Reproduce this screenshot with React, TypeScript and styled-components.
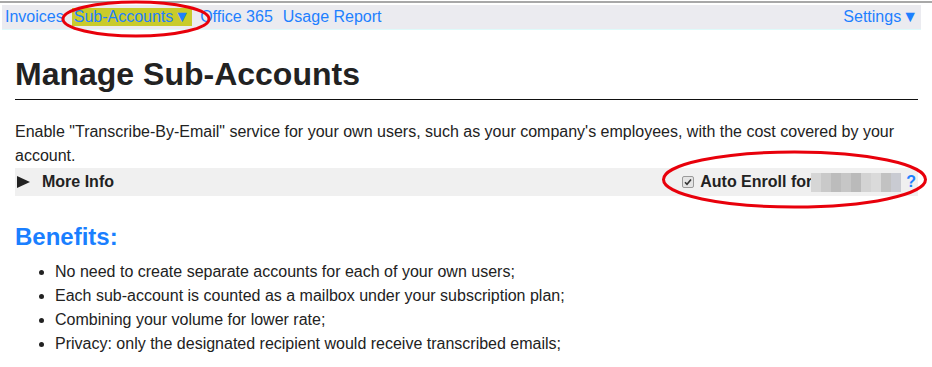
import React from "react";
import styled, { createGlobalStyle } from "styled-components";

const GlobalStyle = createGlobalStyle`
  body {
    margin: 0;
    background: #ffffff;
    font-family: "Liberation Sans", Arial, sans-serif;
    color: #222222;
  }
`;

const Page = styled.div`
  position: relative;
  width: 932px;
  height: 367px;
  overflow: hidden;
`;

const TopRule = styled.div`
  margin-top: 1px;
  height: 2px;
  background: #a8a8a8;
`;

const NavBar = styled.nav`
  margin: 2px 11px 0 2px;
  height: 24px;
  padding: 0 1px 0 1px;
  display: flex;
  justify-content: space-between;
  align-items: center;
  background: #ebebf0;
  border-bottom: 1px solid #defafa;
`;

const NavGroup = styled.div`
  display: flex;
  align-items: center;
  gap: 6px;
`;

const NavLink = styled.a<{ $active?: boolean }>`
  font-size: 16px;
  line-height: 18px;
  color: #1e80ff;
  text-decoration: none;
  padding: 0 2px;
  background: ${(p) => (p.$active ? "#c9cb2b" : "transparent")};
  cursor: pointer;
`;

const Caret = styled.span`
  font-size: 16px;
  margin-left: 1px;
`;

const Main = styled.main`
  padding: 0 14px 0 15px;
`;

const Title = styled.h1`
  margin: 26px 0 0;
  padding-bottom: 6px;
  font-size: 32px;
  line-height: 37px;
  font-weight: 700;
  color: #222222;
  border-bottom: 1px solid #111111;
`;

const Intro = styled.p`
  margin: 20px 0 0;
  font-size: 16px;
  line-height: 24px;
`;

const InfoBar = styled.div`
  height: 28px;
  padding: 0 2px 0 2px;
  display: flex;
  align-items: center;
  justify-content: space-between;
  background: #f0f0f0;
`;

const Toggle = styled.div`
  display: flex;
  align-items: center;
  gap: 12px;
  font-size: 16px;
  font-weight: 700;
`;

const Arrow = styled.span`
  width: 0;
  height: 0;
  border-left: 13px solid #222222;
  border-top: 6px solid transparent;
  border-bottom: 6px solid transparent;
`;

const Enroll = styled.label`
  display: flex;
  align-items: center;
  font-size: 16px;
  font-weight: 700;
`;

const Check = styled.span`
  width: 10px;
  height: 10px;
  margin-right: 6px;
  display: flex;
  align-items: center;
  justify-content: center;
  background: #e4e4e4;
  border: 1px solid #9a9a9a;
  border-radius: 2px;
`;

const Redacted = styled.span`
  display: flex;
  height: 19px;
  margin-left: -1px;
`;

const Pixel = styled.span<{ $shade: string }>`
  width: 10px;
  height: 19px;
  background: ${(p) => p.$shade};
`;

const Help = styled.a`
  margin-left: 5px;
  color: #1e80ff;
  font-weight: 700;
  text-decoration: none;
`;

const SubTitle = styled.h2`
  margin: 27px 0 0;
  font-size: 24px;
  line-height: 28px;
  font-weight: 700;
  color: #1a7fff;
`;

const List = styled.ul`
  margin: 9px 0 0;
  padding-left: 40px;
  font-size: 16px;
  line-height: 24px;
`;

const Ring = styled.svg`
  position: absolute;
  pointer-events: none;
`;

const shades = [
  "#d6d6d6",
  "#c9c9c9",
  "#bcbcbc",
  "#c6c6c6",
  "#bababa",
  "#d3d3d3",
  "#dadada",
  "#c2c2c2",
  "#c9cbd2",
];

const benefits = [
  "No need to create separate accounts for each of your own users;",
  "Each sub-account is counted as a mailbox under your subscription plan;",
  "Combining your volume for lower rate;",
  "Privacy: only the designated recipient would receive transcribed emails;",
];

const App = () => {
  return (
    <Page>
      <GlobalStyle />
      <TopRule />
      <NavBar>
        <NavGroup>
          <NavLink>Invoices</NavLink>
          <NavLink $active>
            Sub-Accounts<Caret>▼</Caret>
          </NavLink>
          <NavLink>Office 365</NavLink>
          <NavLink>Usage Report</NavLink>
        </NavGroup>
        <NavLink>
          Settings<Caret>▼</Caret>
        </NavLink>
      </NavBar>
      <Main>
        <Title>Manage Sub-Accounts</Title>
        <Intro>
          Enable "Transcribe-By-Email" service for your own users, such as your
          company's employees, with the cost covered by your account.
        </Intro>
        <InfoBar>
          <Toggle>
            <Arrow />
            More Info
          </Toggle>
          <Enroll>
            <Check>
              <svg width="8" height="8" viewBox="0 0 8 8">
                <path d="M1 4.2 L3 6.2 L7 1.5" fill="none" stroke="#333" strokeWidth="1.6" />
              </svg>
            </Check>
            Auto Enroll for
            <Redacted>
              {shades.map((s, i) => (
                <Pixel key={i} $shade={s} />
              ))}
            </Redacted>
            <Help>?</Help>
          </Enroll>
        </InfoBar>
        <SubTitle>Benefits:</SubTitle>
        <List>
          {benefits.map((b) => (
            <li key={b}>{b}</li>
          ))}
        </List>
      </Main>
      <Ring style={{ left: 60, top: 0 }} width="152" height="39" viewBox="0 0 152 39">
        <ellipse cx="76" cy="19" rx="73" ry="17" fill="none" stroke="#e8000b" strokeWidth="3" />
      </Ring>
      <Ring style={{ left: 661, top: 150 }} width="268" height="60" viewBox="0 0 268 60">
        <ellipse cx="133.5" cy="29.5" rx="131" ry="27.5" fill="none" stroke="#e8000b" strokeWidth="3" />
      </Ring>
    </Page>
  );
};

export default App;
